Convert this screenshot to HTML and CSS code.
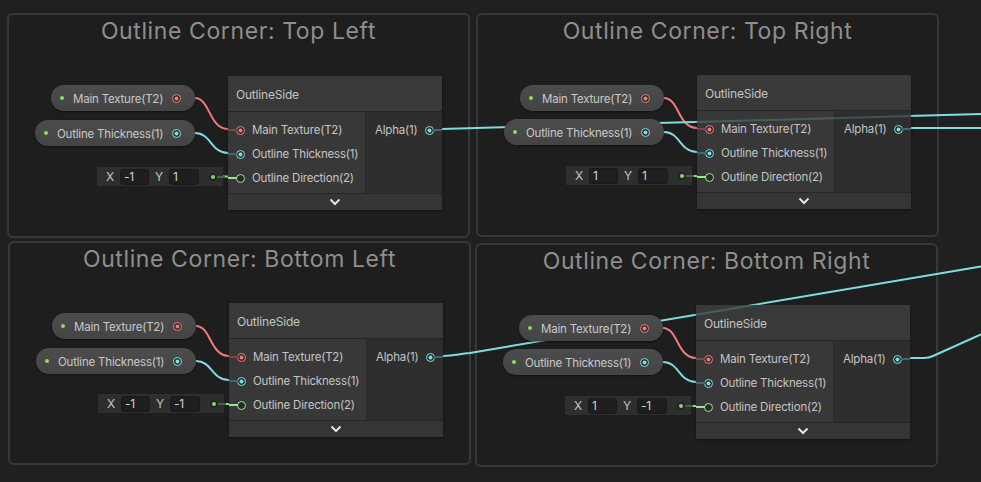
FILE: index.html
```html
<!DOCTYPE html>
<html lang="en">
<head>
<meta charset="utf-8">
<title>Shader Graph – Outline Corners</title>
<link rel="stylesheet" href="styles.css">
</head>
<body>
<div class="graph">

  <section class="group g1">
    <h2 class="group-title">Outline Corner: Top Left</h2>
    <svg class="wires" width="459" height="221">
      <path class="w-tex" d="M186,83 C201,83 200,114 219,114"/>
      <path class="w-float" d="M186,118 C202,118 202,138 219,138"/>
      <path class="w-vec" d="M213,161.5 L219,161.5"/>
    </svg>
    <div class="prop prop-tex"><span class="exp"></span><span class="prop-label">Main Texture(T2)</span><span class="port tex"></span></div>
    <div class="prop prop-thick"><span class="exp"></span><span class="prop-label">Outline Thickness(1)</span><span class="port float"></span></div>
    <div class="vec2 vec2-low"><span class="vlabel">X</span><span class="vfield">-1</span><span class="vlabel second">Y</span><span class="vfield wide">1</span><span class="vdot"></span></div>
    <div class="node node-low">
      <div class="node-head">OutlineSide</div>
      <div class="node-body">
        <div class="node-in">
          <div class="row"><span class="port in tex"></span><span>Main Texture(T2)</span></div>
          <div class="row"><span class="port in float"></span><span>Outline Thickness(1)</span></div>
          <div class="row"><span class="port in vec hollow"></span><span>Outline Direction(2)</span></div>
        </div>
        <div class="node-out">
          <div class="row"><span>Alpha(1)</span><span class="port out float"></span></div>
        </div>
      </div>
      <div class="node-foot"><svg width="12" height="8" viewBox="0 0 12 8"><polyline points="1.5,1.5 6,6 10.5,1.5"/></svg></div>
    </div>
  </section>

  <section class="group g2">
    <h2 class="group-title">Outline Corner: Top Right</h2>
    <svg class="wires" width="459" height="220">
      <path class="w-tex" d="M186,83 C201,83 200,113 219,113"/>
      <path class="w-float" d="M186,117 C202,117 202,137 219,137"/>
      <path class="w-vec" d="M213,161 L219,161"/>
    </svg>
    <div class="prop prop-tex"><span class="exp"></span><span class="prop-label">Main Texture(T2)</span><span class="port tex"></span></div>
    <div class="prop prop-thick prop-high"><span class="exp"></span><span class="prop-label">Outline Thickness(1)</span><span class="port float"></span></div>
    <div class="vec2"><span class="vlabel">X</span><span class="vfield">1</span><span class="vlabel second">Y</span><span class="vfield wide">1</span><span class="vdot"></span></div>
    <div class="node">
      <div class="node-head">OutlineSide</div>
      <div class="node-body">
        <div class="node-in">
          <div class="row"><span class="port in tex"></span><span>Main Texture(T2)</span></div>
          <div class="row"><span class="port in float"></span><span>Outline Thickness(1)</span></div>
          <div class="row"><span class="port in vec hollow"></span><span>Outline Direction(2)</span></div>
        </div>
        <div class="node-out">
          <div class="row"><span>Alpha(1)</span><span class="port out float"></span></div>
        </div>
      </div>
      <div class="node-foot"><svg width="12" height="8" viewBox="0 0 12 8"><polyline points="1.5,1.5 6,6 10.5,1.5"/></svg></div>
    </div>
  </section>

  <section class="group g3">
    <h2 class="group-title">Outline Corner: Bottom Left</h2>
    <svg class="wires" width="459" height="220">
      <path class="w-tex" d="M186,83 C201,83 200,113 219,113"/>
      <path class="w-float" d="M186,118 C202,118 202,137 219,137"/>
      <path class="w-vec" d="M213,161 L219,161"/>
    </svg>
    <div class="prop prop-tex"><span class="exp"></span><span class="prop-label">Main Texture(T2)</span><span class="port tex"></span></div>
    <div class="prop prop-thick"><span class="exp"></span><span class="prop-label">Outline Thickness(1)</span><span class="port float"></span></div>
    <div class="vec2"><span class="vlabel">X</span><span class="vfield">-1</span><span class="vlabel second">Y</span><span class="vfield wide">-1</span><span class="vdot"></span></div>
    <div class="node">
      <div class="node-head">OutlineSide</div>
      <div class="node-body">
        <div class="node-in">
          <div class="row"><span class="port in tex"></span><span>Main Texture(T2)</span></div>
          <div class="row"><span class="port in float"></span><span>Outline Thickness(1)</span></div>
          <div class="row"><span class="port in vec hollow"></span><span>Outline Direction(2)</span></div>
        </div>
        <div class="node-out">
          <div class="row"><span>Alpha(1)</span><span class="port out float"></span></div>
        </div>
      </div>
      <div class="node-foot"><svg width="12" height="8" viewBox="0 0 12 8"><polyline points="1.5,1.5 6,6 10.5,1.5"/></svg></div>
    </div>
  </section>

  <section class="group g4">
    <h2 class="group-title">Outline Corner: Bottom Right</h2>
    <svg class="wires" width="459" height="220">
      <path class="w-tex" d="M186,83 C201,83 200,113 219,113"/>
      <path class="w-float" d="M186,117 C202,117 202,137 219,137"/>
      <path class="w-vec" d="M213,161 L219,161"/>
    </svg>
    <div class="prop prop-tex"><span class="exp"></span><span class="prop-label">Main Texture(T2)</span><span class="port tex"></span></div>
    <div class="prop prop-thick prop-high"><span class="exp"></span><span class="prop-label">Outline Thickness(1)</span><span class="port float"></span></div>
    <div class="vec2"><span class="vlabel">X</span><span class="vfield">1</span><span class="vlabel second">Y</span><span class="vfield wide">-1</span><span class="vdot"></span></div>
    <div class="node">
      <div class="node-head">OutlineSide</div>
      <div class="node-body">
        <div class="node-in">
          <div class="row"><span class="port in tex"></span><span>Main Texture(T2)</span></div>
          <div class="row"><span class="port in float"></span><span>Outline Thickness(1)</span></div>
          <div class="row"><span class="port in vec hollow"></span><span>Outline Direction(2)</span></div>
        </div>
        <div class="node-out">
          <div class="row"><span>Alpha(1)</span><span class="port out float"></span></div>
        </div>
      </div>
      <div class="node-foot"><svg width="12" height="8" viewBox="0 0 12 8"><polyline points="1.5,1.5 6,6 10.5,1.5"/></svg></div>
    </div>
  </section>

  <svg class="long-wires back" width="981" height="482">
    <path class="w-float" d="M442,129 L981,114"/>
    <path class="w-float" d="M911,128 L981,128"/>
    <path class="w-float" d="M443,356 C455,356 458,354 470,353 L981,266.5"/>
    <path class="w-float" d="M910,358 L924,358 Q929,358 933,356 L981,334.5"/>
  </svg>
  <svg class="long-wires front" width="981" height="482">
    <path class="w-dim" d="M697,122 L911,116"/>
    <path class="w-dim" d="M696,314.7 L753.5,305"/>
  </svg>
</div>
</body>
</html>
```

FILE: styles.css
```css
* { box-sizing: border-box; }

html, body {
  margin: 0;
  padding: 0;
  background: #202020;
}

body {
  font-family: "Inter", "Noto Sans", sans-serif;
  font-size: 11.5px;
  letter-spacing: -0.2px;
  color: #c4c4c4;
}

.graph {
  position: relative;
  width: 981px;
  height: 482px;
  overflow: hidden;
  background: #202020;
}

/* ---------- groups ---------- */
.group {
  position: absolute;
  width: 463px;
  height: 224px;
  border: 2px solid #373737;
  border-radius: 6px;
  background: #1e1e1e;
}
.g1 { left: 7px;   top: 13px; height: 225px; }
.g2 { left: 476px; top: 13px; }
.g3 { left: 8px;   top: 241px; }
.g4 { left: 475px; top: 243px; }

.group-title {
  margin: 0;
  padding-top: 3px;
  font-weight: 400;
  font-size: 23px;
  letter-spacing: 0.6px;
  line-height: 27px;
  text-align: center;
  color: #8e8e8e;
}

/* ---------- wires ---------- */
.wires {
  position: absolute;
  left: 0;
  top: 0;
  z-index: 1;
  overflow: visible;
  fill: none;
}
.long-wires {
  position: absolute;
  left: 0;
  top: 0;
  fill: none;
  pointer-events: none;
}
.long-wires.back { z-index: 1; }
.long-wires.front { z-index: 3; }

.w-tex   { stroke: #f07a7a; stroke-width: 2; fill: none; }
.w-float { stroke: #7fdde2; stroke-width: 2; fill: none; }
.w-vec   { stroke: #96e88c; stroke-width: 2; fill: none; }
.w-dim   { stroke: #7fdde2; stroke-opacity: 0.22; stroke-width: 2; fill: none; }

/* ---------- ports ---------- */
.port {
  position: relative;
  flex: none;
  width: 9px;
  height: 9px;
  border-radius: 50%;
  border: 1.5px solid var(--c);
  background: radial-gradient(circle, var(--c) 0 1.7px, #2a2a2a 2.3px);
}
.port.hollow { background: #2a2a2a; }
.tex   { --c: #f07a7a; --dim: #7a4848; }
.float { --c: #7fdde2; --dim: #3f6a6c; }
.vec   { --c: #96e88c; --dim: #96e88c; }

.port.in::before {
  content: "";
  position: absolute;
  right: 100%;
  top: 50%;
  width: 9px;
  height: 2px;
  margin-top: -1px;
  background: var(--dim);
}
.port.out::after {
  content: "";
  position: absolute;
  left: 100%;
  top: 50%;
  width: 9px;
  height: 2px;
  margin-top: -1px;
  background: var(--dim);
}

/* ---------- property pills ---------- */
.prop {
  position: absolute;
  z-index: 2;
  height: 26px;
  border-radius: 13px;
  background: linear-gradient(#4c4c4c, #444444);
  box-shadow: 0 1px 2px rgba(0, 0, 0, 0.45);
  display: flex;
  align-items: center;
  padding: 0 14.5px 0 9px;
  color: #c8c8c8;
}
.prop-tex   { left: 42px; top: 70px;  width: 144px; }
.prop-thick { left: 26px; top: 105px; width: 160px; }
.prop-thick.prop-high { top: 104px; }

.exp {
  width: 4px;
  height: 4px;
  border-radius: 50%;
  background: #86e052;
  flex: none;
}
.prop-label {
  flex: 1;
  margin-left: 9px;
  padding-top: 2px;
  white-space: nowrap;
}

/* ---------- inline vector2 field ---------- */
.vec2 {
  position: absolute;
  z-index: 2;
  left: 88px;
  top: 151px;
  width: 126px;
  height: 19px;
  background: #2e2e2e;
  display: flex;
  align-items: center;
  padding-left: 9px;
  color: #c4c4c4;
  font-size: 12px;
}
.vec2.vec2-low { top: 152px; }
.vlabel {
  width: 14px;
  flex: none;
}
.vlabel.second { margin-left: 6px; }
.vfield {
  width: 29px;
  height: 16px;
  flex: none;
  background: #1e1e1e;
  border: 1px solid #191919;
  border-radius: 3px;
  padding-left: 3px;
  line-height: 14px;
  color: #d2d2d2;
}
.vfield.wide { width: 30px; }
.vdot {
  position: relative;
  margin-left: auto;
  margin-right: 8px;
  width: 4px;
  height: 4px;
  border-radius: 50%;
  background: #84d862;
  box-shadow: 0 0 0 2px #242424;
}
.vdot::after {
  content: "";
  position: absolute;
  left: 6px;
  top: 1px;
  width: 8px;
  height: 2px;
  background: #4a5e48;
}

/* ---------- OutlineSide node ---------- */
.node {
  position: absolute;
  z-index: 2;
  left: 219px;
  top: 60px;
  width: 214px;
  display: flex;
  flex-direction: column;
  box-shadow: 0 1px 3px rgba(0, 0, 0, 0.4);
}
.node.node-low { top: 61px; }
.node-head {
  height: 36px;
  display: flex;
  align-items: center;
  padding-left: 8px;
  padding-top: 2px;
  background: #393939;
  border-bottom: 1px solid #262626;
  color: #c4c4c4;
  font-size: 12px;
}
.node-body {
  display: flex;
  height: 81px;
}
.node-in {
  width: 138px;
  padding-top: 6px;
  background: #383838;
  border-right: 1px solid #2b2b2b;
}
.node-out {
  flex: 1;
  padding-top: 6px;
  background: #2e2e2e;
}
.row {
  height: 24px;
  display: flex;
  align-items: center;
  white-space: nowrap;
}
.node-in .row { padding-left: 8px; gap: 7px; }
.node-out .row {
  padding: 0 8px 0 9px;
  justify-content: space-between;
}
.node-foot {
  height: 17px;
  display: flex;
  align-items: center;
  justify-content: center;
  background: #353535;
  border-top: 1px solid #262626;
}
.node-foot polyline {
  fill: none;
  stroke: #e4e4e4;
  stroke-width: 2;
}
```
